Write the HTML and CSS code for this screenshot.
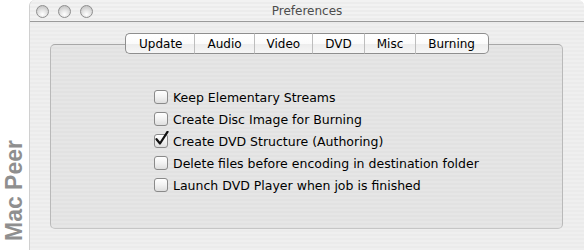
FILE: index.html
```html
<!DOCTYPE html>
<html>
<head>
<meta charset="utf-8">
<link rel="stylesheet" href="styles.css">
</head>
<body>
<div class="page">
  <div class="side"><span class="side-label">Mac Peer</span></div>
  <div class="window">
    <div class="titlebar">
      <div class="lights"><span class="light"></span><span class="light"></span><span class="light"></span></div>
      <div class="title">Preferences</div>
      <div></div>
    </div>
    <div class="content">
      <div class="tabs">
        <div class="tab">Update</div>
        <div class="tab">Audio</div>
        <div class="tab">Video</div>
        <div class="tab">DVD</div>
        <div class="tab selected">Misc</div>
        <div class="tab">Burning</div>
      </div>
      <div class="box">
        <div class="options">
          <div class="opt"><span class="cb"></span><span>Keep Elementary Streams</span></div>
          <div class="opt"><span class="cb"></span><span>Create Disc Image for Burning</span></div>
          <div class="opt"><span class="cb checked"><svg class="tick" width="16" height="16" viewBox="0 0 16 16"><path d="M2.5 8.2 L6 12.5 L13.5 0.8" fill="none" stroke="#111" stroke-width="2.2" stroke-linecap="round" stroke-linejoin="round"/></svg></span><span>Create DVD Structure (Authoring)</span></div>
          <div class="opt"><span class="cb"></span><span>Delete files before encoding in destination folder</span></div>
          <div class="opt"><span class="cb"></span><span>Launch DVD Player when job is finished</span></div>
        </div>
      </div>
    </div>
  </div>
</div>
</body>
</html>
```

FILE: styles.css
```css
html, body {
  margin: 0;
  padding: 0;
  background: #ffffff;
}
body {
  font-family: "DejaVu Sans", "Liberation Sans", sans-serif;
  font-size: 12px;
  color: #000;
}
.page {
  display: flex;
  width: 584px;
  height: 250px;
  overflow: hidden;
}
.side {
  width: 29px;
  flex: none;
  display: flex;
  align-items: flex-end;
  justify-content: center;
  padding-bottom: 9px;
  box-sizing: border-box;
}
.side-label {
  writing-mode: vertical-rl;
  transform: rotate(180deg);
  font-family: "Liberation Sans", Arial, sans-serif;
  font-weight: bold;
  font-size: 23px;
  color: #8f8f8f;
  line-height: 1;
}
.window {
  flex: 1;
  background: repeating-linear-gradient(to bottom, #efefef 0, #efefef 2px, #ebebeb 2px, #ebebeb 4px);
  border-radius: 6px 6px 0 0;
  border-left: 1px solid #d0d0d0;
  box-sizing: border-box;
}
.titlebar {
  height: 21px;
  border-bottom: 1px solid #9a9a9a;
  display: grid;
  grid-template-columns: 1fr auto 1fr;
  align-items: center;
  background: repeating-linear-gradient(to bottom, #f2f2f2 0, #f2f2f2 2px, #ececec 2px, #ececec 4px);
  border-radius: 6px 6px 0 0;
}
.lights {
  display: flex;
  gap: 9px;
  padding-left: 6px;
  padding-top: 1px;
}
.light {
  width: 11px;
  height: 11px;
  border-radius: 50%;
  border: 1px solid #8e8e8e;
  background: radial-gradient(circle at 50% 75%, #ffffff 0, #e2e2e2 45%, #b8b8b8 100%);
}
.title {
  color: #4c4c4c;
  font-size: 12px;
  padding-top: 1px;
}
.content {
  padding: 11px 21px 0 20px;
}
.tabs {
  display: flex;
  justify-content: center;
  height: 21px;
  margin-bottom: -10px;
  position: relative;
  z-index: 1;
  padding-left: 1px;
}
.tab {
  height: 21px;
  box-sizing: border-box;
  padding: 0 12px;
  display: flex;
  align-items: center;
  border-top: 1px solid #8e8e8e;
  border-bottom: 1px solid #8e8e8e;
  border-left: 1px solid #bdbdbd;
  background: linear-gradient(to bottom, #ffffff 0, #fbfbfb 50%, #ececec 51%, #f6f6f6 100%);
  line-height: 1;
}
.tab:first-child {
  border-left: 1px solid #8e8e8e;
  border-radius: 5px 0 0 5px;
  padding-left: 13px;
}
.tab:last-child {
  border-right: 1px solid #8e8e8e;
  border-radius: 0 5px 5px 0;
  padding-right: 13px;
}
.box {
  height: 185px;
  box-sizing: border-box;
  border: 1px solid #b9b9b9;
  border-top-color: #a8a8a8;
  border-bottom-color: #c6c6c6;
  border-radius: 5px;
  background: repeating-linear-gradient(to bottom, #e6e6e6 0, #e6e6e6 2px, #e2e2e2 2px, #e2e2e2 4px);
}
.options {
  padding: 41px 0 0 103px;
  display: flex;
  flex-direction: column;
  font-size: 12.5px;
}
.opt {
  height: 22px;
  display: flex;
  align-items: center;
  gap: 5px;
}
.cb {
  width: 14px;
  height: 14px;
  box-sizing: border-box;
  border: 1px solid #8a8a8a;
  border-radius: 3px;
  background: linear-gradient(to bottom, #ffffff 0, #f2f2f2 50%, #dedede 100%);
  position: relative;
  flex: none;
}
.tick {
  position: absolute;
  left: -1px;
  top: -4px;
}
```
